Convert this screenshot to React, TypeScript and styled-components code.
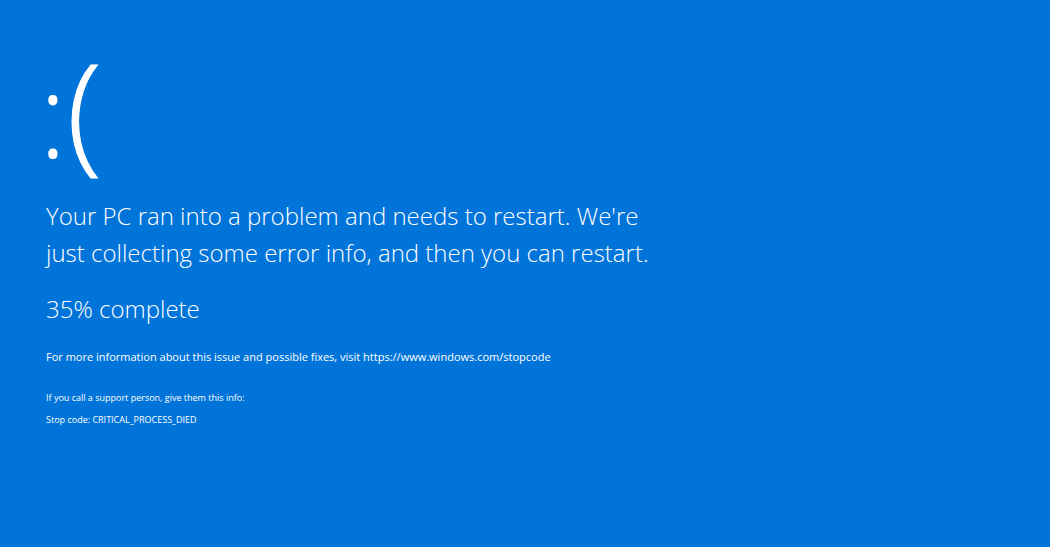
import React from 'react';
import styled, { createGlobalStyle } from 'styled-components';

const GlobalStyle = createGlobalStyle`
    html, body {
        margin: 0;
        padding: 0;
        background: #0074d9;
    }
    body {
        font-family: "Open Sans", "Noto Sans", "Liberation Sans", sans-serif;
        color: #ffffff;
    }
`;

const Screen = styled.div`
    width: 1050px;
    height: 547px;
    background: #0074d9;
    box-sizing: border-box;
    padding: 43px 0 0 46px;
    display: flex;
    flex-direction: column;
    overflow: hidden;
`;

const Face = styled.div`
    font-weight: 300;
    font-size: 116px;
    line-height: 140px;
    height: 140px;
    margin-left: -7px;
    white-space: nowrap;
`;

const Mouth = styled.span`
    font-size: 129px;
    line-height: 0;
    margin-left: 0;
    -webkit-text-stroke: 1px #ffffff;
`;

const Message = styled.p`
    margin: 14px 0 0;
    font-weight: 300;
    font-size: 24px;
    line-height: 37px;
`;

const Progress = styled.p`
    margin: 22px 0 0;
    font-weight: 300;
    font-size: 24px;
    line-height: 32px;
`;

const Info = styled.p<{ size: number; top: number }>`
    margin: ${p => p.top}px 0 0;
    font-weight: 400;
    font-size: ${p => p.size}px;
    line-height: ${p => p.size + 10}px;
`;

const App = () => {
    return (
        <>
            <GlobalStyle />
            <Screen>
                <Face>:<Mouth>(</Mouth></Face>
                <Message>
                    Your PC ran into a problem and needs to restart. We're<br />
                    just collecting some error info, and then you can restart.
                </Message>
                <Progress>35% complete</Progress>
                <Info size={11} top={21}>
                    For more information about this issue and possible fixes, visit https://www.windows.com/stopcode
                </Info>
                <Info size={9} top={21}>If you call a support person, give them this info:</Info>
                <Info size={9} top={3}>Stop code: CRITICAL_PROCESS_DIED</Info>
            </Screen>
        </>
    );
};

export default App;
